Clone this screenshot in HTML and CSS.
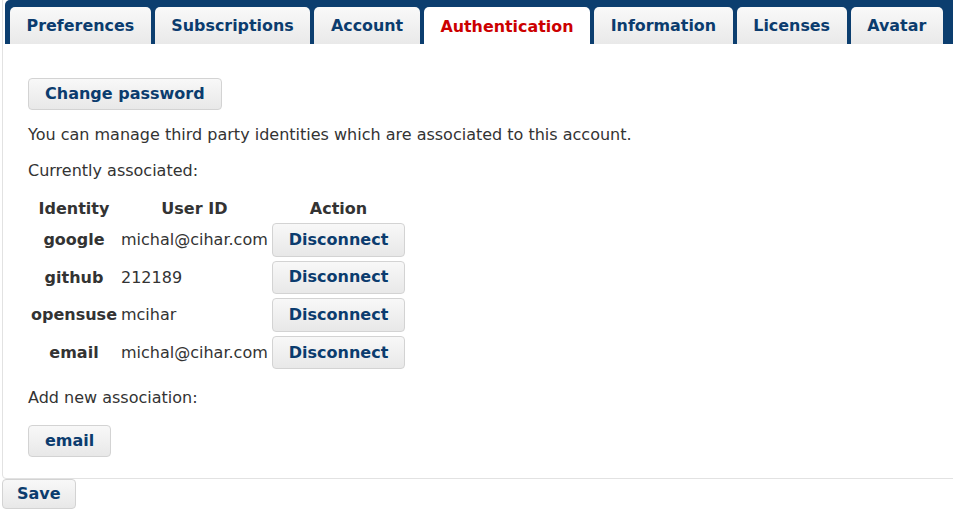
FILE: index.html
```html
<!DOCTYPE html>
<html>
<head>
<meta charset="utf-8">
<link rel="stylesheet" href="styles.css">
</head>
<body>
<div class="tabs">
  <ul class="tab-nav">
    <li class="tab"><a>Preferences</a></li>
    <li class="tab"><a>Subscriptions</a></li>
    <li class="tab"><a>Account</a></li>
    <li class="tab active"><a>Authentication</a></li>
    <li class="tab"><a>Information</a></li>
    <li class="tab"><a>Licenses</a></li>
    <li class="tab"><a>Avatar</a></li>
  </ul>
  <div class="panel">
    <p class="first"><button class="btn">Change password</button></p>
    <p>You can manage third party identities which are associated to this account.</p>
    <p class="before-table">Currently associated:</p>
    <table class="assoc">
      <thead>
        <tr><th>Identity</th><th>User ID</th><th>Action</th></tr>
      </thead>
      <tbody>
        <tr><th>google</th><td>michal@cihar.com</td><td><button class="btn btn-row">Disconnect</button></td></tr>
        <tr><th>github</th><td>212189</td><td><button class="btn btn-row">Disconnect</button></td></tr>
        <tr><th>opensuse</th><td>mcihar</td><td><button class="btn btn-row">Disconnect</button></td></tr>
        <tr><th>email</th><td>michal@cihar.com</td><td><button class="btn btn-row">Disconnect</button></td></tr>
      </tbody>
    </table>
    <p class="add">Add new association:</p>
    <p class="last"><button class="btn">email</button></p>
  </div>
</div>
<button class="btn save">Save</button>
</body>
</html>
```

FILE: styles.css
```css
html, body {
  margin: 0;
  padding: 0;
  background: #fff;
}
body {
  font-family: "DejaVu Sans", sans-serif;
  font-size: 16px;
  color: #333;
  overflow: hidden;
}
.tabs {
  width: 960px;
  margin-top: -3px;
  margin-left: 2px;
  border: 1px solid #e2e2e2;
  border-radius: 4px;
  padding: 2px;
}
.tab-nav {
  list-style: none;
  margin: 0;
  padding: 7px 0 0 5px;
  display: flex;
  gap: 4px;
  background: #0c3e6f;
  border-radius: 5px 5px 0 0;
  height: 44px;
  box-sizing: border-box;
}
.tab {
  display: flex;
  align-items: center;
  height: 37px;
  padding: 0 16.6px;
  border-radius: 5px 5px 0 0;
  background: linear-gradient(#f9f9f9, #e9e9e9);
  font-size: 15.9px;
  font-weight: bold;
  color: #0b3c6e;
  box-sizing: border-box;
}
.tab.active {
  background: #fff;
  color: #cc0000;
  height: 38px;
}
.panel {
  padding: 34px 24px 19px 23px;
}
.panel p {
  margin: 0 0 17px 0;
  line-height: 19px;
}
.panel p.first {
  margin-bottom: 15px;
}
.panel p.before-table {
  margin-bottom: 16px;
}
.panel p.add {
  margin-bottom: 18px;
}
.panel p.last {
  margin: 0;
}
.btn {
  font-family: "DejaVu Sans", sans-serif;
  font-size: 16px;
  font-weight: bold;
  color: #0b3c6e;
  background: linear-gradient(#f8f8f8, #e8e8e8);
  border: 1px solid #d3d3d3;
  border-radius: 4px;
  padding: 6px 16px;
  line-height: 18px;
  cursor: pointer;
  vertical-align: middle;
}
.btn-row {
  padding: 6.8px 16px;
}
.assoc {
  margin: 0 0 16px 0;
  border-spacing: 2px;
}
.assoc th, .assoc td {
  padding: 1px;
  text-align: center;
  line-height: 19px;
}
.assoc td {
  text-align: left;
}
.assoc td:last-child {
  text-align: center;
}
.assoc thead th {
  padding-bottom: 2px;
}
.assoc th {
  color: #333;
  font-weight: bold;
}
.save {
  display: block;
  margin: 0 0 0 2px;
  padding: 5px 14px;
}
```
